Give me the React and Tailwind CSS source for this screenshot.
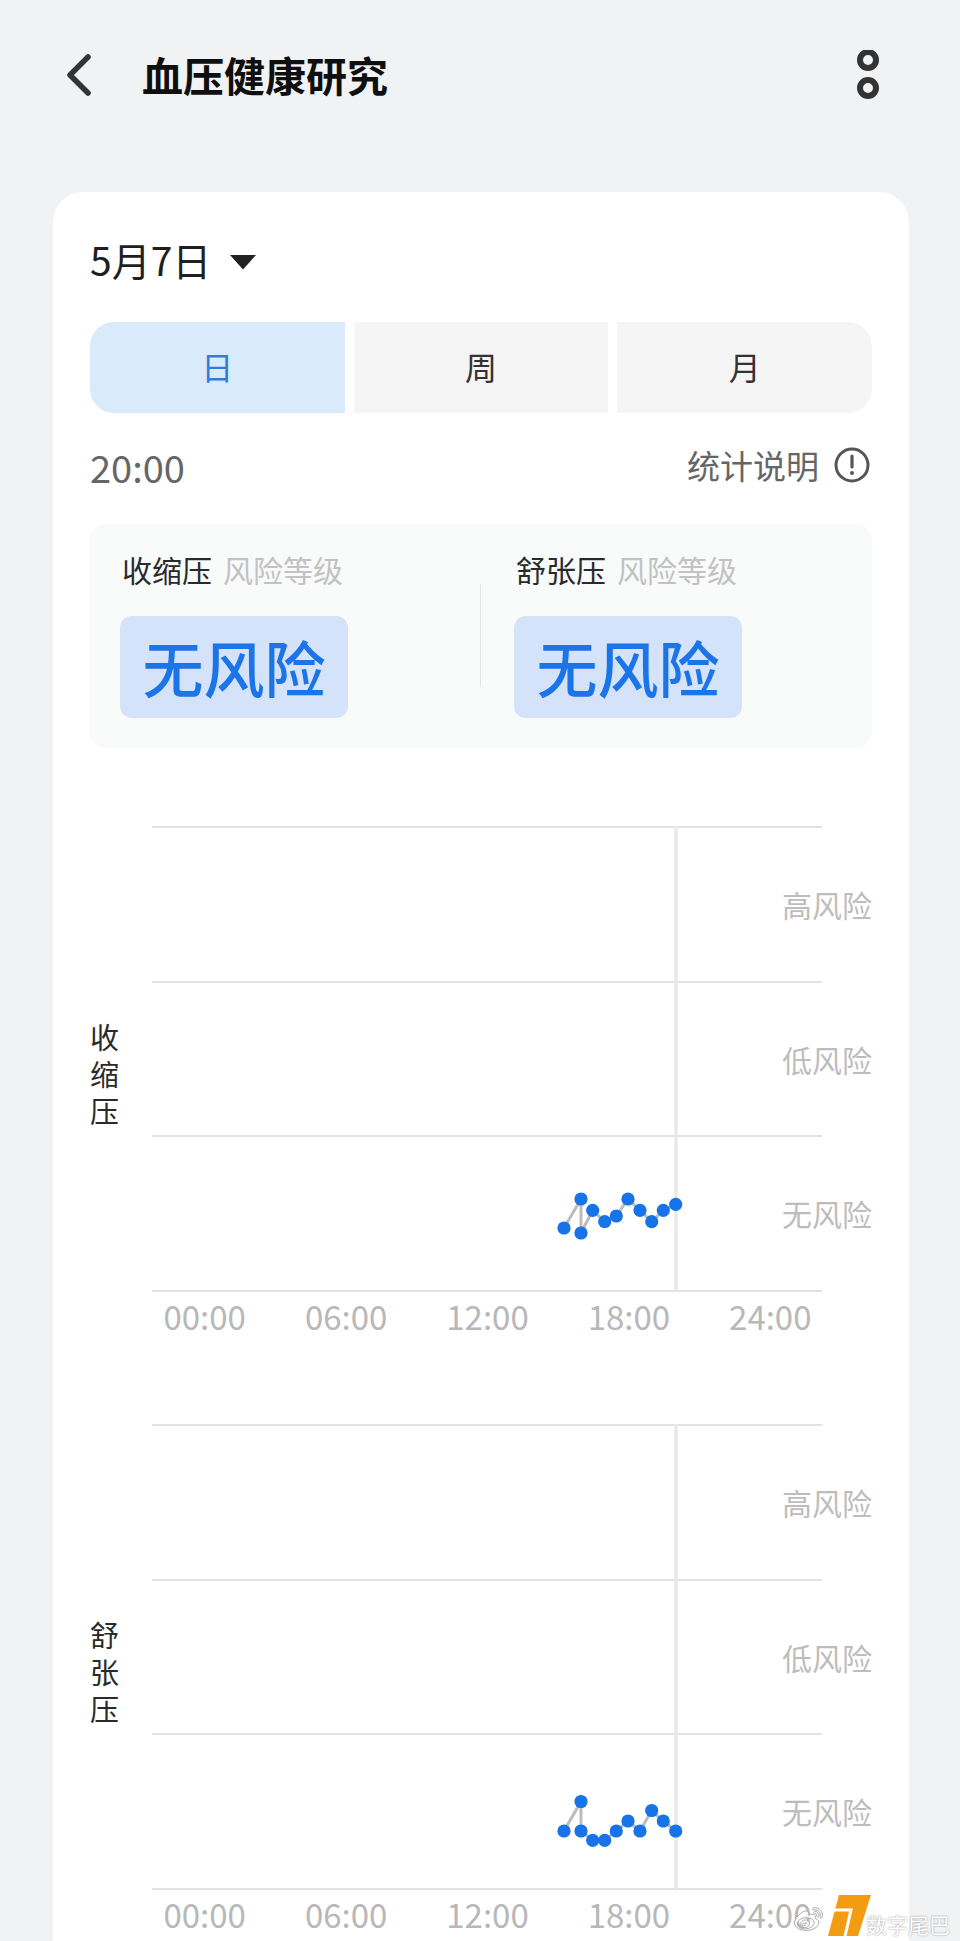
import React from "react";
import { FaWeibo } from "react-icons/fa";

const FONT = "font-['Noto_Sans_CJK_SC','Noto_Sans',sans-serif]";

const xs = [412, 429, 429, 440.7, 452.7, 464.3, 476, 488, 499.7, 511.3, 523.7];
const systolic = [402, 373, 407, 384.3, 395.7, 390, 373, 384.3, 395.7, 384.3, 378.3];
const diastolic = [407, 377.5, 407, 416.3, 416.3, 407, 397, 407, 386.5, 397, 407];

function Chart({ label, ys, className }) {
  return (
    <div className={`flex ${className}`}>
      <div className="w-[62px] flex flex-col justify-center pb-[16px] text-[29px] leading-[37px] text-[#2a2a2a]">
        {label.split("").map((c, i) => (
          <span key={i}>{c}</span>
        ))}
      </div>
      <div className="relative w-[720px]">
        {["高风险", "低风险", "无风险"].map((t) => (
          <div key={t} className="h-[154.7px] flex flex-col">
            <div className="h-[2px] w-[670px] bg-[#e2e2e2]" />
            <div className="flex-1 flex items-center justify-end pb-[1px] text-[30px] leading-[40px] text-[#bdbdbd]">{t}</div>
          </div>
        ))}
        <div className="h-[2px] w-[670px] bg-[#e2e2e2]" />
        <div className="mt-[4px] -ml-[18px] w-[707px] grid grid-cols-5 text-center text-[33px] leading-[40px] text-[#b8b8b8]">
          {["00:00", "06:00", "12:00", "18:00", "24:00"].map((t) => (
            <span key={t}>{t}</span>
          ))}
        </div>
        <svg className="absolute left-0 top-0" width="670" height="466" viewBox="0 0 670 466">
          <line x1="524" y1="0" x2="524" y2="465" stroke="#e9e9e9" strokeWidth="3.5" />
          <polyline
            points={xs.map((x, i) => `${x},${ys[i]}`).join(" ")}
            fill="none"
            stroke="#bcbcbc"
            strokeWidth="3"
          />
          {xs.map((x, i) => (
            <circle key={i} cx={x} cy={ys[i]} r="6.6" fill="#1673e8" />
          ))}
        </svg>
      </div>
    </div>
  );
}

function Risk({ name, className }) {
  return (
    <div className={className}>
      <div className="flex items-center h-[34px] -mt-[1px] mb-[2px] text-[30px] leading-[34px] pl-[2px]">
        <span className="text-[#2a2a2a]">{name}</span>
        <span className="ml-[11px] text-[#c2c2c2]">风险等级</span>
      </div>
      <div className="mt-[30px] w-[228px] h-[102px] rounded-[12px] bg-[#d4e3fa] flex items-center justify-center text-[61px] leading-[70px] font-medium text-[#1c74e9]">
        无风险
      </div>
    </div>
  );
}

export default function App() {
  return (
    <div className={`relative w-[960px] h-[1941px] overflow-hidden bg-[#f1f2f4] flex flex-col ${FONT}`}>
      <header className="h-[192px] shrink-0 flex items-start pt-[50px] pl-[66px] pr-[81px]">
        <svg width="26" height="50" viewBox="0 0 26 50">
          <polyline points="22,7 4,25 22,43" fill="none" stroke="#333" strokeWidth="5.5" strokeLinecap="round" strokeLinejoin="round" />
        </svg>
        <h1 className="ml-[50px] -mt-[2px] text-[41px] leading-[52px] font-bold text-[#0f0f0f]">血压健康研究</h1>
        <svg width="22" height="50" viewBox="0 0 22 50" className="ml-auto">
          <circle cx="11" cy="10" r="8" fill="none" stroke="#333" strokeWidth="6" />
          <circle cx="11" cy="38" r="8" fill="none" stroke="#333" strokeWidth="6" />
        </svg>
      </header>

      <main className="ml-[53px] w-[856px] flex-1 rounded-t-[30px] bg-white pl-[37px] pr-[37px] pt-[47px]">
        <div className="flex items-center h-[44px]">
          <span className="-mt-[4px] text-[39px] leading-[44px] text-[#1f1f1f]">5月7日</span>
          <svg width="28" height="16" viewBox="0 0 28 16" className="ml-[18px] mt-[2px]">
            <polygon points="1,1 27,1 14,15.5" fill="#222" />
          </svg>
        </div>

        <div className="mt-[39px] grid grid-cols-3 gap-[9px] h-[91px] text-[32px]">
          <div className="rounded-l-[24px] bg-[#d9eafb] text-[#2f7fd9] flex items-center justify-center pb-[4px]">日</div>
          <div className="bg-[#f5f5f5] text-[#333] flex items-center justify-center pb-[4px]">周</div>
          <div className="rounded-r-[24px] bg-[#f5f5f5] text-[#333] flex items-center justify-center pb-[4px]">月</div>
        </div>

        <div className="mt-[28px] h-[50px] flex items-start justify-between">
          <span className="pt-[4px] text-[38px] leading-[44px] text-[#666]">20:00</span>
          <div className="flex items-center h-[50px] text-[33px] leading-[44px] text-[#666] mr-[2px]">
            <span className="-mt-[3px]">统计说明</span>
            <svg width="36" height="36" viewBox="0 0 36 36" className="ml-[15px] -mt-[2px]">
              <circle cx="18" cy="18" r="16" fill="none" stroke="#555" strokeWidth="3" />
              <line x1="18" y1="9" x2="18" y2="20" stroke="#555" strokeWidth="3.2" strokeLinecap="round" />
              <circle cx="18" cy="26" r="2" fill="#555" />
            </svg>
          </div>
        </div>

        <section className="mt-[33px] h-[224px] rounded-[16px] bg-[#f9fafa] pl-[30px] pt-[29px] flex items-start">
          <Risk name="收缩压" className="w-[360px]" />
          <div className="w-[1px] h-[103px] mt-[31px] bg-[#e4e4e4]" />
          <Risk name="舒张压" className="ml-[33px]" />
        </section>

        <Chart label="收缩压" ys={systolic} className="mt-[78px]" />
        <Chart label="舒张压" ys={diastolic} className="mt-[88px]" />
      </main>

      <div className="absolute left-[792px] top-[1893px] flex items-center">
        <FaWeibo className="mt-[10px] w-[33px] h-[28px] text-white" stroke="#a8a8a8" strokeWidth="18" />
        <svg width="44" height="41" viewBox="0 0 44 41" className="ml-[3px] shrink-0">
          <polygon points="11,0 43,0 30,41 0,41" fill="#f39c12" />
          <polyline points="5,15 23,15 17,41" fill="none" stroke="#fff" strokeWidth="3" />
        </svg>
        <span className="-ml-[6px] mt-[18px] text-[21px] leading-[26px] text-white whitespace-nowrap [text-shadow:0_0_2px_#8a8a8a]">数字尾巴</span>
      </div>
    </div>
  );
}
